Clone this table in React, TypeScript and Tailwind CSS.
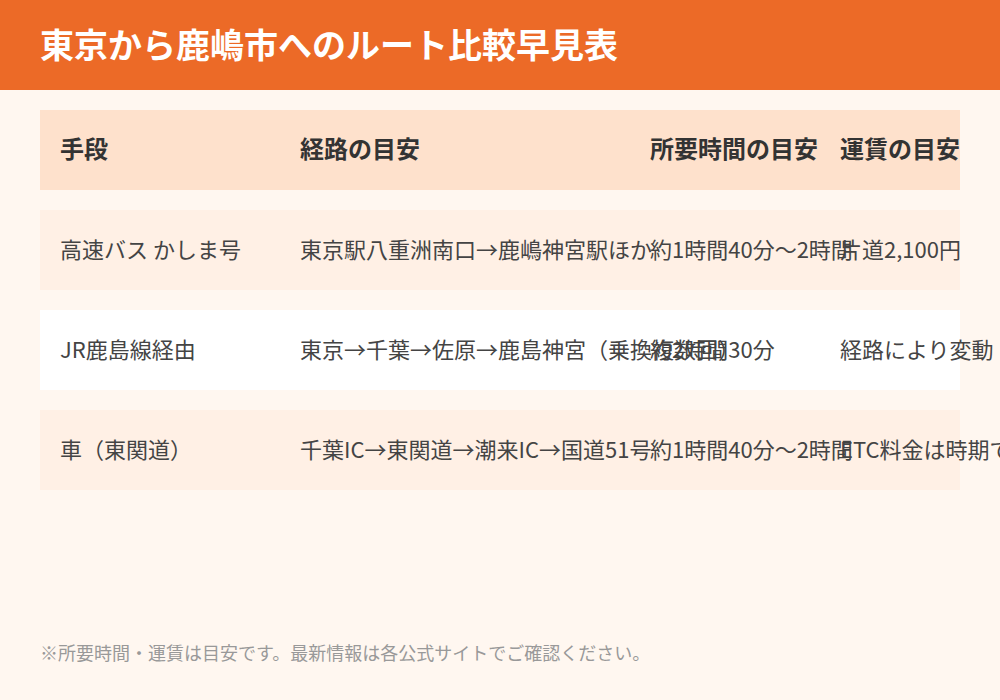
const columns = ["手段", "経路の目安", "所要時間の目安", "運賃の目安"];

const routes = [
  {
    mode: "高速バス かしま号",
    path: "東京駅八重洲南口→鹿嶋神宮駅ほか",
    time: "約1時間40分〜2時間",
    fare: "片道2,100円",
    bg: "bg-[#fff0e5]",
  },
  {
    mode: "JR鹿島線経由",
    path: "東京→千葉→佐原→鹿島神宮（乗換複数回）",
    time: "約2時間30分",
    fare: "経路により変動",
    bg: "bg-white",
  },
  {
    mode: "車（東関道）",
    path: "千葉IC→東関道→潮来IC→国道51号",
    time: "約1時間40分〜2時間",
    fare: "ETC料金は時期で変動",
    bg: "bg-[#fff0e5]",
  },
];

export default function App() {
  return (
    <div
      className="min-h-screen w-full overflow-hidden bg-[#fff7f0] flex flex-col"
      style={{ fontFamily: '"Noto Sans CJK JP", "Noto Sans", sans-serif' }}
    >
      {/* Title bar */}
      <header className="h-[90px] bg-[#ec6a27] px-10 pb-0.5 flex items-center">
        <h1 className="text-[34px] font-bold text-white leading-none">
          東京から鹿嶋市へのルート比較早見表
        </h1>
      </header>

      {/* Table */}
      <main className="flex-1 px-10 pt-5 flex flex-col gap-5">
        <div className="grid grid-cols-[240px_350px_190px_140px] h-20 pb-1 items-center bg-[#fee1cc]">
          {columns.map((col) => (
            <div
              key={col}
              className="px-5 whitespace-nowrap text-[24px] font-bold text-[#333333]"
            >
              {col}
            </div>
          ))}
        </div>

        {routes.map((route) => (
          <div
            key={route.mode}
            className={`grid grid-cols-[240px_350px_190px_140px] h-20 pb-1 items-center ${route.bg}`}
          >
            <div className="px-5 whitespace-nowrap text-[22px] text-[#444444]">
              {route.mode}
            </div>
            <div className="px-5 whitespace-nowrap text-[22px] text-[#444444]">
              {route.path}
            </div>
            <div className="px-5 whitespace-nowrap text-[22px] text-[#444444]">
              {route.time}
            </div>
            <div className="px-5 whitespace-nowrap text-[22px] text-[#444444]">
              {route.fare}
            </div>
          </div>
        ))}
      </main>

      {/* Note */}
      <footer className="px-10 pb-[34px]">
        <p className="text-[18px] text-[#999999]">
          ※所要時間・運賃は目安です。最新情報は各公式サイトでご確認ください。
        </p>
      </footer>
    </div>
  );
}
